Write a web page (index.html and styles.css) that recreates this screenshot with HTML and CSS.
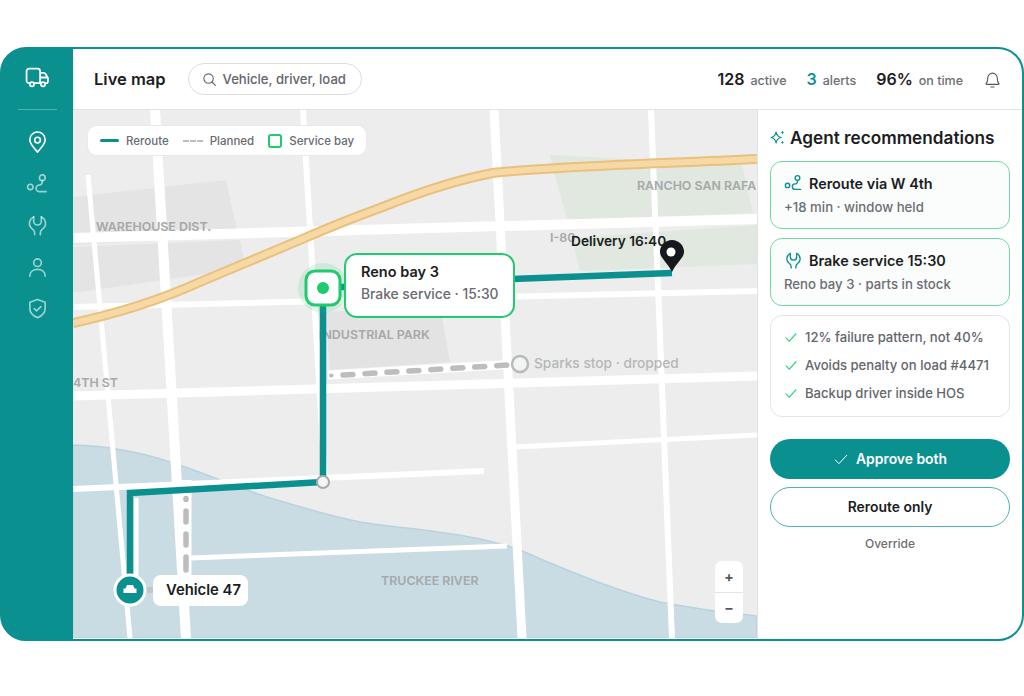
FILE: index.html
```html
<!DOCTYPE html>
<html lang="en">

<head>
    <meta charset="UTF-8">
    <meta name="viewport" content="width=device-width, initial-scale=1.0">
    <title>Live map</title>
    <link rel="stylesheet" href="styles.css">
</head>

<body>
    <div class="app">
        <nav class="sidebar">
            <svg class="side-icon logo" viewBox="0 0 24 24">
                <path d="M14.5 17.5H9M4.5 17.5H4a2.5 2.5 0 0 1-2.5-2.5V6A2.5 2.5 0 0 1 4 3.500h8A2.500 2.500 0 0 1 14.500 6v11.500M14.500 7.500H18a2 2 0 0 1 1.800 1.100L22 12.500V15.500a2 2 0 0 1-2 2M14.500 12h7.200" />
                <circle cx="6.700" cy="18.500" r="2" />
                <circle cx="17.300" cy="18.500" r="2" />
            </svg>
            <div class="side-divider"></div>
            <svg class="side-icon active" viewBox="0 0 24 24">
                <path d="M12 22c-1-2-8-7.500-8-13a8 8 0 0 1 16 0c0 5.500-7 11-8 13z" />
                <circle cx="12" cy="9.500" r="3" />
            </svg>
            <svg class="side-icon" viewBox="0 0 24 24">
                <circle cx="4.500" cy="14.500" r="2.800" />
                <circle cx="17" cy="5" r="3" />
                <path d="M17 8v1.500a3 3 0 0 1-3 3a3.500 3.500 0 0 0 0 7h7" />
            </svg>
            <svg class="side-icon" viewBox="0 0 24 24">
                <path d="M8 3v4.500a4 4 0 0 0 8 0V3" />
                <path d="M8 3C3 5.500 2 12.500 6.500 15.500c2 1.300 3 2.500 2.500 6M16 3c5 2.500 6 9.500 1.500 12.500-2 1.300-3 2.500-2.500 6" />
            </svg>
            <svg class="side-icon" viewBox="0 0 24 24">
                <circle cx="12" cy="7" r="4" />
                <path d="M4 21c0-4.500 3.500-7 8-7s8 2.500 8 7" />
            </svg>
            <svg class="side-icon" viewBox="0 0 24 24">
                <path d="M12 2.500l8 3v6c0 5-3.500 8.500-8 10-4.500-1.500-8-5-8-10v-6z" />
                <path d="M8.500 12l2.500 2.500 4.500-4.500" />
            </svg>
        </nav>

        <div class="main">
            <header class="topbar">
                <h1 class="page-title">Live map</h1>
                <div class="search">
                    <svg class="search-icon" viewBox="0 0 24 24">
                        <circle cx="10.500" cy="10.500" r="7.500" />
                        <path d="M16 16l5.500 5.500" />
                    </svg>
                    <span>Vehicle, driver, load</span>
                </div>
                <div class="stats">
                    <div class="stat"><b>128</b><span>active</span></div>
                    <div class="stat"><b class="teal">3</b><span>alerts</span></div>
                    <div class="stat"><b>96%</b><span>on time</span></div>
                </div>
                <svg class="bell" viewBox="0 0 24 24">
                    <path d="M4 17c1.500-1.500 2-3 2-7a6 6 0 0 1 12 0c0 4 .5 5.500 2 7 .5.500.2 1.200-.5 1.200h-15C3.800 18.200 3.500 17.500 4 17z" />
                    <path d="M10 21.500h4" />
                </svg>
            </header>

            <div class="content">
                <section class="map">
                    <svg class="map-art" viewBox="73 110 684 528">
                        <!-- ground -->
                        <rect x="73" y="110" width="684" height="528" fill="#ecedec" />
                        <path d="M73 197L226 180L238 235L73 245z" fill="#e3e4e3" />
                        <path d="M73 247L240 240L246 268L80 292L73 292z" fill="#e3e4e3" />
                        <path d="M325 312L440 306L450 362L330 370z" fill="#e2e3e2" />
                        <path d="M550 155L742 165L753 213L567 220z" fill="#e0e8df" />
                        <path d="M572 238L757 225V264L580 271z" fill="#e0e8df" />
                        <path d="M73 445C110 446 140 452 170 462C200 471 235 487 267 497C300 507 330 516 360 522C410 530 470 532 520 550C570 572 620 592 660 602C700 610 730 613 757 616V638H73z" fill="#c9dce3" stroke="#b9d3dd" stroke-width="1.500" />

                        <!-- roads -->
                        <g fill="none" stroke="#fff" stroke-linecap="butt">
                            <path d="M88 175L130 638" stroke-width="5" />
                            <path d="M155 110L186 638" stroke-width="10" />
                            <path d="M186 480V575" stroke-width="11" />
                            <path d="M303 110L325 482" stroke-width="6" />
                            <path d="M494 110L522 638" stroke-width="9" />
                            <path d="M651 110L672 638" stroke-width="6" />
                            <path d="M73 238L757 219" stroke-width="10" />
                            <path d="M73 307L757 291" stroke-width="6" />
                            <path d="M73 396L757 376" stroke-width="9" />
                            <path d="M515 447L757 435" stroke-width="5" />
                            <path d="M73 489L484 471" stroke-width="6" />
                            <path d="M136 498L136 580" stroke-width="5" />
                            <path d="M190 558L507 546" stroke-width="5" />
                            <path d="M328 375L520 364" stroke-width="9" />
                        </g>

                        <!-- highway -->
                        <g fill="none">
                            <path d="M73 323C115 314 160 300 200 282C235 267 265 255 300 240C330 227 355 217 380 208C420 192 455 180 493 173C540 167 650 164 757 159" stroke="#e9c17f" stroke-width="10" />
                            <path d="M73 323C115 314 160 300 200 282C235 267 265 255 300 240C330 227 355 217 380 208C420 192 455 180 493 173C540 167 650 164 757 159" stroke="#f6d9a5" stroke-width="6" />
                        </g>

                        <!-- place names -->
                        <g class="place">
                            <text x="96" y="231">WAREHOUSE DIST.</text>
                            <text x="637" y="190">RANCHO SAN RAFA</text>
                            <text x="319" y="339">INDUSTRIAL PARK</text>
                            <text x="73" y="387">4TH ST</text>
                            <text x="381" y="585">TRUCKEE RIVER</text>
                            <text x="550" y="242">I-80</text>
                        </g>

                        <!-- planned route -->
                        <g fill="none" stroke="#bcbdbe" stroke-width="5.500" stroke-linecap="round">
                            <path d="M331 375.500h.5" stroke-width="4" />
                            <path d="M343 375L508 365" stroke-dasharray="10 12" />
                            <path d="M186 498.500v1M186 511v11M186 534v11M186 557v13" />
                        </g>
                        <path d="M146 590H153" stroke="#c4c5c6" stroke-width="6" />
                        <circle cx="520" cy="364" r="8" fill="#f3f4f4" stroke="#b9babb" stroke-width="2.500" />
                        <text class="stop-label" x="534" y="368">Sparks stop · dropped</text>

                        <!-- reroute -->
                        <g fill="none" stroke="#0b9090" stroke-width="6.500">
                            <path d="M323 296V482L130 493V590" />
                            <path d="M338 287H348" />
                            <path d="M512 279L672 273" />
                        </g>
                        <circle cx="323" cy="482" r="6" fill="#f5f5f5" stroke="#a9aaab" stroke-width="2" />

                        <!-- delivery pin -->
                        <path d="M672 272C668 263 660 258 660 252a12 12 0 0 1 24 0C684 258 676 263 672 272z" fill="#16181d" />
                        <circle cx="671" cy="252" r="4.500" fill="#fff" />
                        <text class="delivery-label" x="571" y="246">Delivery 16:40</text>

                        <!-- vehicle -->
                        <circle cx="130" cy="590" r="15" fill="#0b9090" stroke="#fff" stroke-width="3" />
                        <path d="M127 585h6l1.500 3.500h2v4.500h-13v-4.500h2z" fill="#fff" />

                        <!-- service bay marker -->
                        <circle cx="323" cy="288" r="25" fill="#1fcb6e" fill-opacity=".14" />
                        <rect x="306" y="271" width="34" height="34" rx="9" fill="#fff" stroke="#1fcb6e" stroke-width="3" />
                        <circle cx="323" cy="288" r="6" fill="#1fcb6e" />
                    </svg>

                    <div class="legend">
                        <span class="legend-item"><i class="swatch-line"></i>Reroute</span>
                        <span class="legend-item"><i class="swatch-dash"></i>Planned</span>
                        <span class="legend-item"><i class="swatch-bay"></i>Service bay</span>
                    </div>

                    <div class="callout">
                        <strong>Reno bay 3</strong>
                        <span>Brake service · 15:30</span>
                    </div>

                    <div class="vehicle-label">Vehicle 47</div>

                    <div class="zoom">
                        <div class="zoom-btn">+</div>
                        <div class="zoom-btn">−</div>
                    </div>
                </section>

                <aside class="panel">
                    <h2 class="panel-title">
                        <svg class="spark" viewBox="0 0 24 24">
                            <path d="M10 4.500c.8 4.500 2.500 6.500 7 7.500-4.500 1-6.200 3-7 7.500-.8-4.500-2.500-6.500-7-7.500 4.500-1 6.200-3 7-7.500z" />
                            <path class="spark-fill" d="M19 2l.8 2.200L22 5l-2.200.8L19 8l-.8-2.200L16 5l2.200-.8zM19 16.500l.7 1.800 1.800.7-1.800.7-.7 1.800-.7-1.800-1.800-.7 1.800-.7z" />
                        </svg>
                        Agent recommendations
                    </h2>

                    <div class="rec-card">
                        <div class="rec-head">
                            <svg class="rec-icon" viewBox="0 0 24 24">
                                <circle cx="4.500" cy="14.500" r="2.800" />
                                <circle cx="17" cy="5" r="3" />
                                <path d="M17 8v1.500a3 3 0 0 1-3 3a3.500 3.500 0 0 0 0 7h7" />
                            </svg>
                            Reroute via W 4th
                        </div>
                        <div class="rec-sub">+18 min · window held</div>
                    </div>

                    <div class="rec-card">
                        <div class="rec-head">
                            <svg class="rec-icon" viewBox="0 0 24 24">
                                <path d="M8 3v4.500a4 4 0 0 0 8 0V3" />
                                <path d="M8 3C3 5.500 2 12.500 6.500 15.500c2 1.300 3 2.500 2.500 6M16 3c5 2.500 6 9.500 1.500 12.500-2 1.300-3 2.500-2.500 6" />
                            </svg>
                            Brake service 15:30
                        </div>
                        <div class="rec-sub">Reno bay 3 · parts in stock</div>
                    </div>

                    <ul class="reasons">
                        <li><svg class="check" viewBox="0 0 24 24"><path d="M3 13l6 6L21 6" /></svg>12% failure pattern, not 40%</li>
                        <li><svg class="check" viewBox="0 0 24 24"><path d="M3 13l6 6L21 6" /></svg>Avoids penalty on load #4471</li>
                        <li><svg class="check" viewBox="0 0 24 24"><path d="M3 13l6 6L21 6" /></svg>Backup driver inside HOS</li>
                    </ul>

                    <button class="btn btn-primary"><svg class="check" viewBox="0 0 24 24"><path d="M3 13l6 6L21 6" /></svg>Approve both</button>
                    <button class="btn btn-outline">Reroute only</button>
                    <div class="override">Override</div>
                </aside>
            </div>
        </div>
    </div>
</body>

</html>
```

FILE: styles.css
```css
* {
    box-sizing: border-box;
}

body {
    margin: 0;
    height: 696px;
    overflow: hidden;
    padding-top: 47px;
    background-color: #fff;
    font-family: Inter, "Liberation Sans", sans-serif;
    color: #1b1d22;
}

.app {
    display: flex;
    width: 1024px;
    height: 594px;
    border: 2px solid #0b9090;
    border-radius: 26px;
    overflow: hidden;
    background-color: #0b9090;
}

.sidebar {
    display: flex;
    flex-direction: column;
    align-items: center;
    flex: 0 0 71px;
    padding: 16px 0 0;
    background-color: #0b9090;
}

.side-icon {
    width: 23px;
    height: 23px;
    margin-bottom: 18.500px;
    flex: none;
    fill: none;
    stroke: rgba(255, 255, 255, 0.6);
    stroke-width: 1.700;
    stroke-linecap: round;
    stroke-linejoin: round;
}

.side-icon.active,
.side-icon.logo {
    stroke: #fff;
}

.side-icon.logo {
    width: 25px;
    height: 25px;
    margin-bottom: 19px;
}

.side-divider {
    width: 39px;
    height: 1px;
    flex: none;
    margin-bottom: 21px;
    background-color: rgba(255, 255, 255, 0.3);
}

.main {
    display: flex;
    flex-direction: column;
    flex: 1;
    min-width: 0;
    background-color: #fff;
}

.topbar {
    display: flex;
    align-items: center;
    flex: 0 0 61px;
    padding: 0 20px 0 21px;
    border-bottom: 1px solid #e2e3e5;
}

.page-title {
    margin: 0 22px 0 0;
    font-size: 16.500px;
    font-weight: 600;
}

.search {
    display: flex;
    align-items: center;
    gap: 6px;
    width: 174px;
    height: 32px;
    padding: 0 13px;
    border: 1px solid #dcdee0;
    border-radius: 16px;
    font-size: 13.100px;
    font-weight: 500;
    color: #62656b;
    white-space: nowrap;
}

.search-icon {
    width: 15px;
    height: 15px;
    flex: none;
    fill: none;
    stroke: #62656b;
    stroke-width: 1.700;
    stroke-linecap: round;
}

.stats {
    display: flex;
    align-items: baseline;
    gap: 20px;
    margin-left: auto;
    margin-right: 20px;
}

.stat {
    display: flex;
    align-items: baseline;
    gap: 6px;
    font-size: 12.500px;
    color: #6b6e73;
    font-weight: 500;
}

.stat b {
    font-size: 16px;
    font-weight: 600;
    color: #1b1d22;
}

.stat b.teal {
    color: #0b9090;
}

.bell {
    width: 19px;
    height: 19px;
    flex: none;
    fill: none;
    stroke: #55585e;
    stroke-width: 1.400;
    stroke-linecap: round;
    stroke-linejoin: round;
}

.content {
    display: flex;
    flex: 1;
    min-height: 0;
}

/* map */

.map {
    position: relative;
    flex: 0 0 684px;
    overflow: hidden;
}

.map-art {
    display: block;
    width: 684px;
    height: 528px;
}

.place {
    font-size: 12.400px;
    font-weight: 600;
    fill: #a6a8a9;
}

.stop-label {
    font-size: 13.700px;
    font-weight: 500;
    fill: #b5b7b8;
}

.delivery-label {
    font-size: 13.700px;
    font-weight: 600;
    fill: #1b1d22;
}

.legend {
    position: absolute;
    top: 15px;
    left: 14px;
    display: flex;
    align-items: center;
    gap: 14px;
    width: 280px;
    height: 31px;
    padding: 0 12px;
    border-radius: 10px;
    background-color: #fff;
    border: 1px solid #e8e9ea;
    font-size: 11.500px;
    font-weight: 500;
    color: #686b70;
    white-space: nowrap;
}

.legend-item {
    display: flex;
    align-items: center;
    gap: 7px;
}

.swatch-line {
    width: 19px;
    height: 3px;
    border-radius: 2px;
    background-color: #0b9090;
}

.swatch-dash {
    width: 20px;
    border-top: 2px dashed #bcbdbe;
}

.swatch-bay {
    width: 14px;
    height: 14px;
    border: 2px solid #1fcb6e;
    border-radius: 3px;
}

.callout {
    position: absolute;
    top: 143px;
    left: 271px;
    display: flex;
    flex-direction: column;
    justify-content: center;
    gap: 6px;
    width: 171px;
    height: 65px;
    padding: 0 15px 6px;
    border: 2.500px solid #1fcb6e;
    border-radius: 13px;
    background-color: #fff;
}

.callout strong {
    font-size: 14.500px;
    font-weight: 600;
}

.callout span {
    font-size: 13.800px;
    font-weight: 500;
    color: #686b70;
    white-space: nowrap;
}

.vehicle-label {
    position: absolute;
    top: 465px;
    left: 80px;
    display: flex;
    align-items: center;
    width: 95px;
    height: 31px;
    padding: 0 0 1px 13px;
    border-radius: 8px;
    background-color: #fff;
    font-size: 14.800px;
    font-weight: 600;
}

.zoom {
    position: absolute;
    top: 451px;
    left: 642px;
    width: 28px;
    height: 62px;
    border-radius: 7px;
    background-color: #fff;
}

.zoom-btn {
    display: flex;
    align-items: center;
    justify-content: center;
    height: 31px;
    font-size: 14px;
    font-weight: 700;
    color: #55585e;
}

.zoom-btn + .zoom-btn {
    border-top: 1px solid #e4e5e7;
    padding-bottom: 2px;
}

/* recommendations */

.panel {
    flex: 1;
    min-width: 0;
    padding: 15px 12px 0 12px;
    border-left: 1px solid #e2e3e5;
}

.panel-title {
    display: flex;
    align-items: center;
    gap: 4px;
    height: 24px;
    margin: 0 0 12px;
    font-size: 17.200px;
    font-weight: 600;
    white-space: nowrap;
}

.spark {
    width: 17px;
    height: 17px;
    flex: none;
    margin-left: -1px;
    fill: none;
    stroke: #0b9090;
    stroke-width: 1.700;
    stroke-linejoin: round;
}

.spark-fill {
    fill: #0b9090;
    stroke: none;
}

.rec-card {
    display: flex;
    flex-direction: column;
    justify-content: center;
    gap: 6px;
    height: 68px;
    margin-bottom: 9px;
    padding: 0 13px 2px;
    border: 1.500px solid #6fdc9f;
    border-radius: 12px;
    background-color: #fbfdfc;
}

.rec-head {
    display: flex;
    align-items: center;
    gap: 6px;
    font-size: 14.400px;
    font-weight: 600;
}

.rec-icon {
    width: 19px;
    height: 19px;
    flex: none;
    fill: none;
    stroke: #0b9090;
    stroke-width: 1.700;
    stroke-linecap: round;
    stroke-linejoin: round;
}

.rec-sub {
    font-size: 13.200px;
    font-weight: 500;
    color: #6b6e73;
    white-space: nowrap;
}

.reasons {
    margin: 0 0 22px;
    padding: 7px 13px;
    list-style: none;
    height: 102px;
    border: 1px solid #e4e5e7;
    border-radius: 12px;
}

.reasons li {
    display: flex;
    align-items: center;
    gap: 7px;
    height: 28px;
    font-size: 13.100px;
    font-weight: 500;
    color: #63666c;
    white-space: nowrap;
}

.check {
    width: 14px;
    height: 14px;
    flex: none;
    fill: none;
    stroke: #2ed47f;
    stroke-width: 2;
}

.btn {
    display: flex;
    align-items: center;
    justify-content: center;
    gap: 7px;
    width: 100%;
    height: 40px;
    padding: 0;
    border-radius: 20px;
    font-family: inherit;
    font-size: 13.900px;
    font-weight: 600;
}

.btn-primary {
    margin-bottom: 8px;
    border: none;
    background-color: #0b9090;
    color: #fff;
}

.btn-primary .check {
    width: 16px;
    height: 16px;
    stroke: #fff;
    stroke-width: 1.500;
}

.btn-outline {
    border: 1.500px solid #4fb0b0;
    background-color: #fff;
    color: #1b1d22;
}

.override {
    margin-top: 9px;
    text-align: center;
    font-size: 12px;
    font-weight: 500;
    color: #6b6e73;
}
```
